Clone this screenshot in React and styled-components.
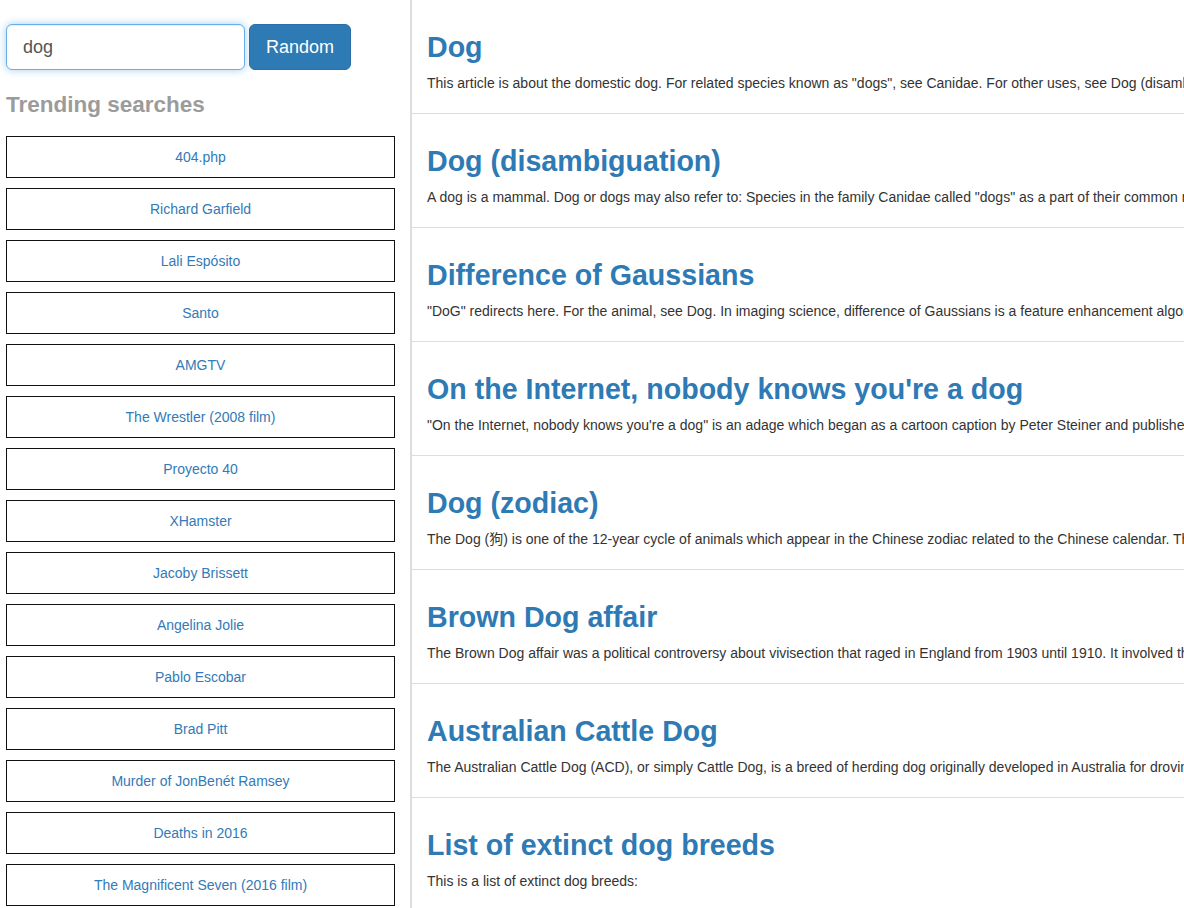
import React, { useState } from 'react';
import styled, { createGlobalStyle } from 'styled-components';

const GlobalStyle = createGlobalStyle`
	* { box-sizing: border-box; }
	body {
		margin: 0;
		font-family: "Liberation Sans", Helvetica, Arial, "Noto Sans CJK SC", sans-serif;
		font-size: 14px;
		line-height: 20px;
		color: #333;
		background: #fff;
		overflow: hidden;
	}
`;

const Page = styled.div`
	display: flex;
	align-items: stretch;
	height: 908px;
	overflow: hidden;
`;

const Sidebar = styled.aside`
	flex: 0 0 412px;
	padding: 24px 15px 0 6px;
	border-right: 2px solid #ddd;
`;

const SearchRow = styled.form`
	display: flex;
	gap: 4px;
`;

const SearchInput = styled.input`
	width: 239px;
	height: 46px;
	padding: 10px 16px;
	font: inherit;
	font-size: 18px;
	color: #555;
	border: 1px solid #66afe9;
	border-radius: 6px;
	outline: none;
	box-shadow: inset 0 1px 1px rgba(0, 0, 0, 0.075), 0 0 8px rgba(102, 175, 233, 0.6);
`;

const RandomButton = styled.button`
	height: 46px;
	padding: 10px 16px;
	font: inherit;
	font-size: 18px;
	color: #fff;
	background: #2e7ab4;
	border: 1px solid #2a6fa5;
	border-radius: 6px;
	cursor: pointer;
`;

const SideHeading = styled.h3`
	margin: 22px 0 18px;
	font-size: 22.5px;
	font-weight: bold;
	line-height: 26px;
	color: #9b9b9b;
`;

const TrendList = styled.ul`
	list-style: none;
	margin: 0;
	padding: 0;
	display: flex;
	flex-direction: column;
	gap: 10px;
`;

const TrendItem = styled.li`
	height: 42px;
	display: flex;
	align-items: center;
	justify-content: center;
	border: 1px solid #111;
	color: #337ab7;
	font-size: 14px;
	cursor: pointer;
`;

const Results = styled.main`
	flex: 1;
	min-width: 0;
	overflow: hidden;
`;

const Result = styled.article`
	padding: 0 0 20px 15px;
	border-bottom: 1px solid #ddd;
	white-space: nowrap;
`;

const ResultTitle = styled.h2`
	margin: 31px 0 9px;
	font-size: 28.6px;
	font-weight: bold;
	line-height: 33px;
	color: #2e7ab4;
`;

const Snippet = styled.p`
	margin: 0;
	font-size: 14px;
	line-height: 20px;
	color: #333;
`;

const trending = [
	'404.php',
	'Richard Garfield',
	'Lali Espósito',
	'Santo',
	'AMGTV',
	'The Wrestler (2008 film)',
	'Proyecto 40',
	'XHamster',
	'Jacoby Brissett',
	'Angelina Jolie',
	'Pablo Escobar',
	'Brad Pitt',
	'Murder of JonBenét Ramsey',
	'Deaths in 2016',
	'The Magnificent Seven (2016 film)',
];

const results = [
	{ title: 'Dog', text: 'This article is about the domestic dog. For related species known as "dogs", see Canidae. For other uses, see Dog (disambiguation).' },
	{ title: 'Dog (disambiguation)', text: 'A dog is a mammal. Dog or dogs may also refer to: Species in the family Canidae called "dogs" as a part of their common names.' },
	{ title: 'Difference of Gaussians', text: '"DoG" redirects here. For the animal, see Dog. In imaging science, difference of Gaussians is a feature enhancement algorithm.' },
	{ title: "On the Internet, nobody knows you're a dog", text: '"On the Internet, nobody knows you\'re a dog" is an adage which began as a cartoon caption by Peter Steiner and published by The New Yorker.' },
	{ title: 'Dog (zodiac)', text: 'The Dog (狗) is one of the 12-year cycle of animals which appear in the Chinese zodiac related to the Chinese calendar. The Dog is associated with the Earthly Branch.' },
	{ title: 'Brown Dog affair', text: 'The Brown Dog affair was a political controversy about vivisection that raged in England from 1903 until 1910. It involved the infiltration of University of London.' },
	{ title: 'Australian Cattle Dog', text: 'The Australian Cattle Dog (ACD), or simply Cattle Dog, is a breed of herding dog originally developed in Australia for droving cattle over long distances.' },
	{ title: 'List of extinct dog breeds', text: 'This is a list of extinct dog breeds:' },
];

const App = () => {
	const [query, setQuery] = useState('dog');

	return (
		<>
			<GlobalStyle />
			<Page>
				<Sidebar>
					<SearchRow onSubmit={e => e.preventDefault()}>
						<SearchInput value={query} onChange={e => setQuery(e.target.value)} />
						<RandomButton type="button">Random</RandomButton>
					</SearchRow>
					<SideHeading>Trending searches</SideHeading>
					<TrendList>
						{trending.map(item => <TrendItem key={item}>{item}</TrendItem>)}
					</TrendList>
				</Sidebar>
				<Results>
					{results.map(r => (
						<Result key={r.title}>
							<ResultTitle>{r.title}</ResultTitle>
							<Snippet>{r.text}</Snippet>
						</Result>
					))}
				</Results>
			</Page>
		</>
	);
};

export default App;
